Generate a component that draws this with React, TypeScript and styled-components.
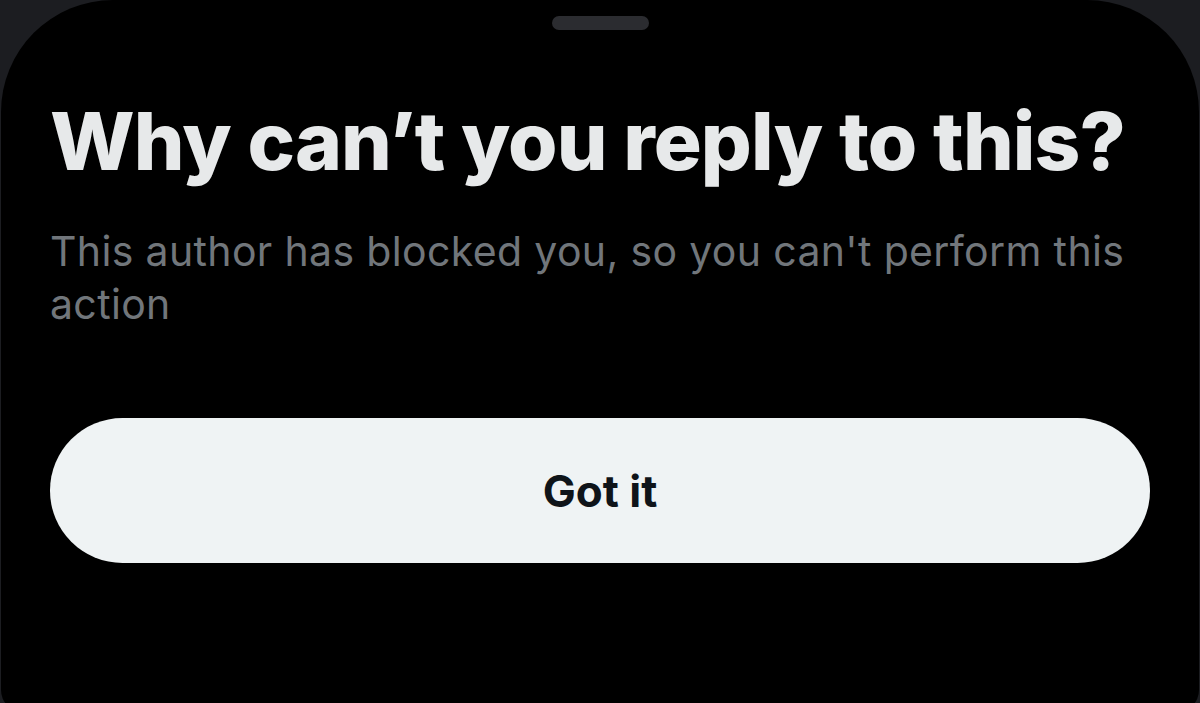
import styled, { createGlobalStyle } from 'styled-components';

const GlobalStyle = createGlobalStyle`
  html, body {
    margin: 0;
    padding: 0;
    background: #1c1d21;
    overflow: hidden;
  }
  body {
    font-family: Inter, "Noto Sans", sans-serif;
    -webkit-font-smoothing: antialiased;
  }
`;

const Page = styled.div`
  width: 1200px;
  height: 703px;
  overflow: hidden;
  display: flex;
  justify-content: center;
`;

// bottom sheet, its lower corners just cut off by the viewport
const Sheet = styled.div`
  width: 1198px;
  height: 712px;
  flex-shrink: 0;
  background: #000;
  border-radius: 112px 112px 22px 22px;
  display: flex;
  flex-direction: column;
  padding: 16px 49px 0 49px;
  box-sizing: border-box;
`;

const Handle = styled.div`
  align-self: center;
  width: 97px;
  height: 14px;
  border-radius: 7px;
  background: #2b2c30;
`;

const Title = styled.h1`
  margin: 63px 0 0;
  font-size: 80px;
  line-height: 96px;
  font-weight: 800;
  color: #e7e9ea;
  letter-spacing: -0.9px;
  white-space: nowrap;
`;

const Body = styled.p`
  margin: 36px 0 0;
  font-size: 41px;
  line-height: 53px;
  font-weight: 400;
  color: #71767b;
  letter-spacing: 0.35px;
`;

const ConfirmButton = styled.button`
  margin-top: 87px;
  height: 145px;
  width: 100%;
  border: none;
  border-radius: 73px;
  background: #eff3f4;
  color: #0f1419;
  font-family: inherit;
  font-size: 44px;
  font-weight: 700;
  cursor: pointer;
`;

export default function App() {
  return (
    <>
      <GlobalStyle />
      <Page>
        <Sheet>
          <Handle />
          <Title>Why can’t you reply to this?</Title>
          <Body>This author has blocked you, so you can't perform this action</Body>
          <ConfirmButton>Got it</ConfirmButton>
        </Sheet>
      </Page>
    </>
  );
}
